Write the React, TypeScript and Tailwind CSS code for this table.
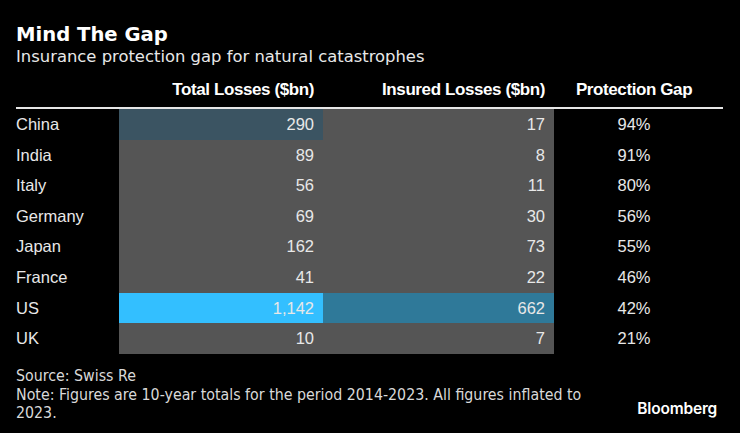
import React from "react";

type Row = {
  country: string;
  total: string;
  insured: string;
  gap: string;
  totalBg: string;
  insuredBg: string;
};

const rows: Row[] = [
  { country: "China", total: "290", insured: "17", gap: "94%", totalBg: "bg-[#3b5462]", insuredBg: "bg-[#555555]" },
  { country: "India", total: "89", insured: "8", gap: "91%", totalBg: "bg-[#555555]", insuredBg: "bg-[#555555]" },
  { country: "Italy", total: "56", insured: "11", gap: "80%", totalBg: "bg-[#555555]", insuredBg: "bg-[#555555]" },
  { country: "Germany", total: "69", insured: "30", gap: "56%", totalBg: "bg-[#555555]", insuredBg: "bg-[#555555]" },
  { country: "Japan", total: "162", insured: "73", gap: "55%", totalBg: "bg-[#555555]", insuredBg: "bg-[#555555]" },
  { country: "France", total: "41", insured: "22", gap: "46%", totalBg: "bg-[#555555]", insuredBg: "bg-[#555555]" },
  { country: "US", total: "1,142", insured: "662", gap: "42%", totalBg: "bg-[#33bfff]", insuredBg: "bg-[#2f7999]" },
  { country: "UK", total: "10", insured: "7", gap: "21%", totalBg: "bg-[#555555]", insuredBg: "bg-[#555555]" },
];

const App = () => {
  return (
    <div className="w-[740px] h-[433px] bg-black text-[#e8e8e8] pl-4 pr-[17px] pt-[23px] overflow-hidden">
      <div className="text-[19.6px] leading-[24px] font-bold text-white font-['DejaVu_Sans',sans-serif]">
        Mind The Gap
      </div>
      <div className="text-[16.4px] leading-[20px] text-[#e8e8e8] font-['DejaVu_Sans',sans-serif]">
        Insurance protection gap for natural catastrophes
      </div>

      <div className="font-['Liberation_Sans',Arial,sans-serif] text-[16.5px]">
        <div className="h-[40px] pt-[5px] flex items-center font-bold text-white text-[17px] tracking-[-0.4px]">
          <div className="w-[103px]" />
          <div className="w-[204px] text-right pr-[9px]">Total Losses ($bn)</div>
          <div className="w-[231px] text-right pr-[9px]">Insured Losses ($bn)</div>
          <div className="w-[169px] text-center pr-[9px]">Protection Gap</div>
        </div>
        <div className="h-[2px] bg-[#e6e6e6]" />
        {rows.map((r) => (
          <div key={r.country} className="h-[30.625px] flex items-stretch">
            <div className="w-[103px] flex items-center">{r.country}</div>
            <div className={`w-[204px] flex items-center justify-end pr-[9px] ${r.totalBg}`}>{r.total}</div>
            <div className={`w-[231px] flex items-center justify-end pr-[9px] ${r.insuredBg}`}>{r.insured}</div>
            <div className="w-[169px] flex items-center justify-center pr-[9px]">{r.gap}</div>
          </div>
        ))}
      </div>

      <div className="mt-[13px] flex justify-between items-end pr-[6px]">
        <div className="w-[592px] text-[15.8px] leading-[18.5px] text-[#d9d9d9] font-stretch-condensed font-['DejaVu_Sans_Condensed','DejaVu_Sans',sans-serif]">
          <div>Source: Swiss Re</div>
          <div>Note: Figures are 10-year totals for the period 2014-2023. All figures inflated to 2023.</div>
        </div>
        <div className="mb-[5px] text-[15.5px] leading-[18px] font-semibold text-white tracking-[-0.2px] font-['Inter',sans-serif]">
          Bloomberg
        </div>
      </div>
    </div>
  );
};

export default App;
